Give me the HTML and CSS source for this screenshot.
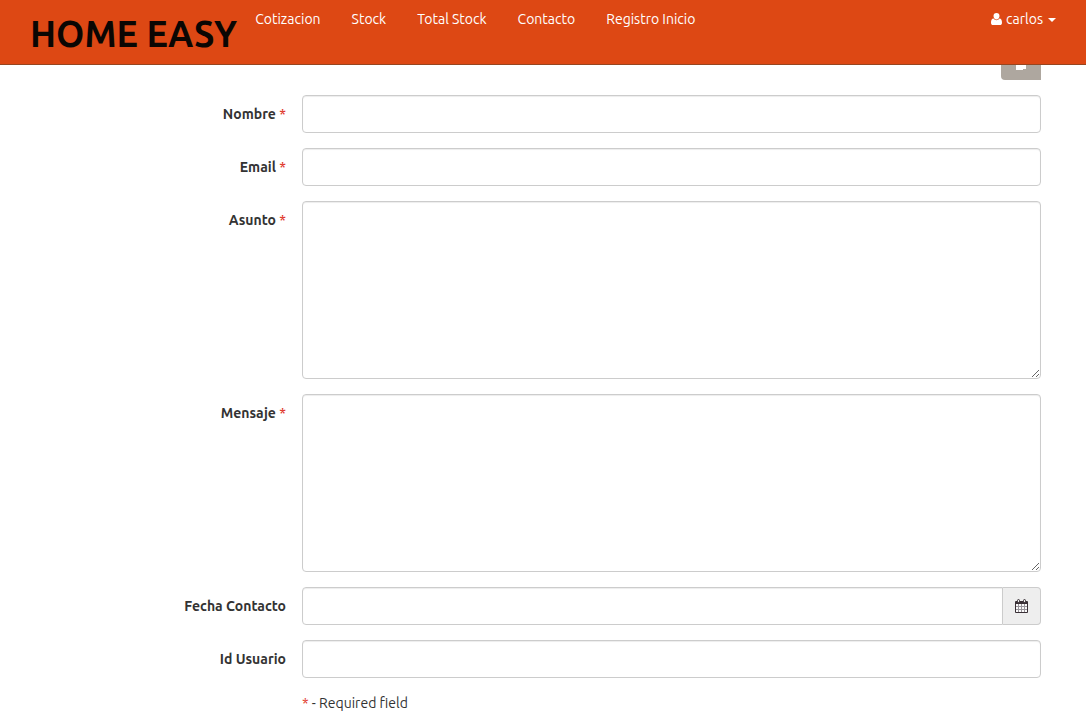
FILE: index.html
```html
<!DOCTYPE html>
<html lang="es">
<head>
<meta charset="utf-8">
<meta name="viewport" content="width=device-width, initial-scale=1">
<title>Home Easy - Contacto</title>
<link rel="stylesheet" href="styles.css">
</head>
<body>
<header class="navbar">
  <a class="brand" href="#">HOME EASY</a>
  <nav class="nav">
    <a href="#">Cotizacion</a>
    <a href="#">Stock</a>
    <a href="#">Total Stock</a>
    <a href="#">Contacto</a>
    <a href="#">Registro Inicio</a>
  </nav>
  <button class="user" type="button">
    <svg class="user-icon" viewBox="0 0 11 12" aria-hidden="true"><path d="M5.500 0a3 3 0 0 1 3 3c0 1.800-1.300 3.500-3 3.500S2.500 4.800 2.500 3a3 3 0 0 1 3-3zM2.600 5.600C3.400 6.600 4.300 7.200 5.500 7.200s2.100-.6 2.900-1.600C10.300 5.700 11 7.500 11 9.700c0 1.500-.8 2.300-2 2.300H2C.8 12 0 11.200 0 9.700 0 7.500.7 5.700 2.600 5.600z"/></svg>
    <span>carlos</span>
    <span class="caret"></span>
  </button>
</header>
<main class="page">
  <div class="toolbar">
    <button class="tool" type="button" aria-label="Copiar">
      <svg viewBox="0 0 14 18" aria-hidden="true"><path d="M2 3h7v3h2l1 1v10H9v1H2z"/></svg>
    </button>
  </div>
  <form class="form">
    <div class="row">
      <label for="nombre">Nombre <span class="req">*</span></label>
      <input class="control" id="nombre" type="text">
    </div>
    <div class="row">
      <label for="email">Email <span class="req">*</span></label>
      <input class="control" id="email" type="text">
    </div>
    <div class="row">
      <label for="asunto">Asunto <span class="req">*</span></label>
      <textarea class="control area" id="asunto"></textarea>
    </div>
    <div class="row">
      <label for="mensaje">Mensaje <span class="req">*</span></label>
      <textarea class="control area" id="mensaje"></textarea>
    </div>
    <div class="row">
      <label for="fecha">Fecha Contacto</label>
      <div class="group">
        <input class="control" id="fecha" type="text">
        <button class="addon" type="button" aria-label="Calendario">
          <svg viewBox="0 0 13 14" aria-hidden="true"><path class="cal-body" d="M1 2h11a1 1 0 0 1 1 1v10a1 1 0 0 1-1 1H1a1 1 0 0 1-1-1V3a1 1 0 0 1 1-1z"/><path class="cal-sheet" d="M1 5h11v8H1z"/><path class="cal-lines" d="M3.500 5v8M6.500 5v8M9.500 5v8M1 7.500h11M1 10.500h11"/><rect class="cal-ring" x="2.500" y=".5" width="2" height="3" rx="1"/><rect class="cal-ring" x="8.500" y=".5" width="2" height="3" rx="1"/></svg>
        </button>
      </div>
    </div>
    <div class="row">
      <label for="usuario">Id Usuario</label>
      <input class="control" id="usuario" type="text">
    </div>
    <p class="note"><span class="req">*</span> - Required field</p>
  </form>
</main>
</body>
</html>
```
FILE: styles.css
```css
* { box-sizing: border-box; }

body {
  margin: 0;
  background: #fff;
  color: #333;
  font: 14px/20px Ubuntu, "Noto Sans", sans-serif;
}

.navbar {
  position: fixed;
  top: 0;
  left: 0;
  right: 0;
  z-index: 10;
  display: flex;
  align-items: flex-start;
  height: 65px;
  padding: 0 30px;
  background: #dd4814;
  border-bottom: 1px solid #97451f;
}

.brand {
  padding: 14px 18px 0 0;
  color: #0a0603;
  font-size: 36px;
  font-weight: 700;
  line-height: 40px;
  text-decoration: none;
  white-space: nowrap;
}

.nav {
  display: flex;
  gap: 31px;
  padding-top: 9px;
}

.nav a {
  color: #fff;
  text-decoration: none;
  white-space: nowrap;
}

.user {
  display: flex;
  align-items: center;
  margin: 9px 0 0 auto;
  padding: 0;
  border: 0;
  background: none;
  color: #fff;
  font: inherit;
}

.user-icon {
  width: 11px;
  height: 12px;
  margin-right: 4px;
  fill: currentColor;
}

.caret {
  margin: 2px 0 0 5px;
  border-top: 4px solid #fff;
  border-left: 4px solid transparent;
  border-right: 4px solid transparent;
}

.page { padding: 42px 45px 0 30px; }

.toolbar {
  display: flex;
  justify-content: flex-end;
  margin-bottom: 15px;
}

.tool {
  display: flex;
  align-items: center;
  justify-content: center;
  width: 40px;
  height: 38px;
  padding: 0;
  border: 0;
  border-radius: 4px 0 0 4px;
  background: #aea79f;
}

.tool svg {
  width: 14px;
  height: 18px;
  fill: #fff;
}

.form {
  display: grid;
  gap: 15px;
}

.row {
  display: grid;
  grid-template-columns: 256px minmax(0, 1fr);
  column-gap: 16px;
}

.row label {
  padding-top: 9px;
  text-align: right;
  font-weight: 700;
}

.req { color: #df382c; }
label .req { font-weight: 500; }

.control {
  display: block;
  width: 100%;
  min-width: 0;
  height: 38px;
  margin: 0;
  padding: 8px 12px;
  border: 1px solid #ccc;
  border-radius: 4px;
  background: #fff;
  box-shadow: inset 0 1px 1px rgba(0, 0, 0, .075);
  color: #333;
  font: inherit;
}

.area {
  height: 178px;
  resize: vertical;
}

.group { display: flex; }

.group .control {
  flex: 1;
  border-radius: 4px 0 0 4px;
}

.addon {
  display: flex;
  align-items: center;
  justify-content: center;
  width: 38px;
  padding: 0;
  border: 1px solid #ccc;
  border-left: 0;
  border-radius: 0 4px 4px 0;
  background: #eee;
}

.addon svg {
  width: 13px;
  height: 14px;
}

.cal-body { fill: #3a3036; }
.cal-sheet { fill: #fafafa; }
.cal-lines { fill: none; stroke: #99949a; }
.cal-ring { fill: #eee; stroke: #3a3036; }

.note { margin: 0 0 10px 272px; }
```
